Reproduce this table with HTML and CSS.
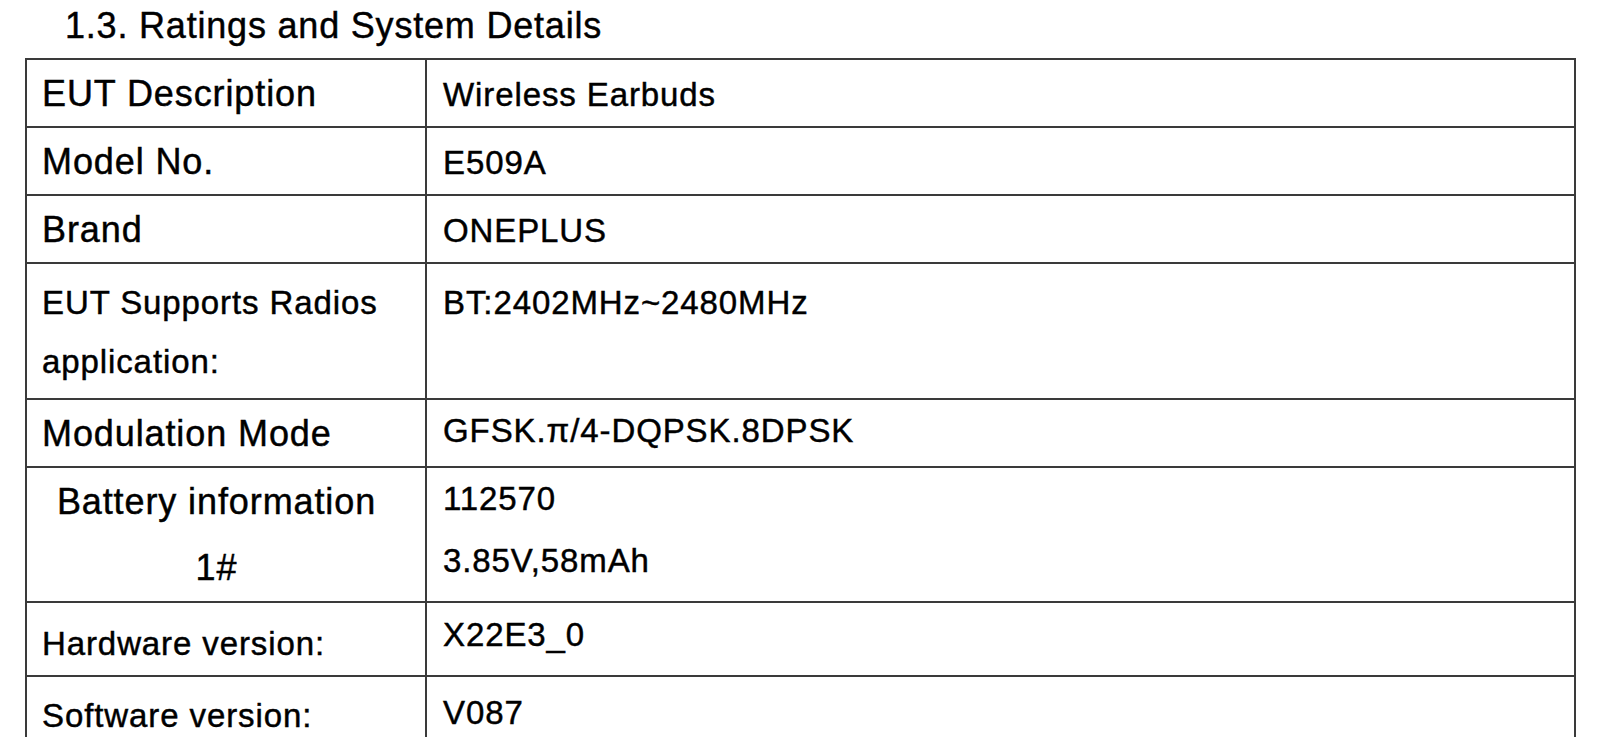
FILE: index.html
```html
<!DOCTYPE html>
<html lang="en">
<head>
<meta charset="utf-8">
<title>1.3. Ratings and System Details</title>
<link rel="stylesheet" href="styles.css">
</head>
<body>
<main class="page">
  <h2 class="heading">1.3. Ratings and System Details</h2>
  <table class="specs">
    <tbody>
      <tr class="r-std">
        <th class="label">EUT Description</th>
        <td class="value">Wireless Earbuds</td>
      </tr>
      <tr class="r-std">
        <th class="label">Model No.</th>
        <td class="value">E509A</td>
      </tr>
      <tr class="r-std">
        <th class="label">Brand</th>
        <td class="value">ONEPLUS</td>
      </tr>
      <tr class="r-radios">
        <th class="label small">EUT Supports Radios<br>application:</th>
        <td class="value">BT:2402MHz~2480MHz</td>
      </tr>
      <tr class="r-mod">
        <th class="label">Modulation Mode</th>
        <td class="value">GFSK.π/4-DQPSK.8DPSK</td>
      </tr>
      <tr class="r-battery">
        <th class="label centered">Battery information<br>1#</th>
        <td class="value">112570<br>3.85V,58mAh</td>
      </tr>
      <tr class="r-hw">
        <th class="label small">Hardware version:</th>
        <td class="value">X22E3_0</td>
      </tr>
      <tr class="r-sw">
        <th class="label small">Software version:</th>
        <td class="value">V087</td>
      </tr>
    </tbody>
  </table>
</main>
</body>
</html>
```

FILE: styles.css
```css
html, body {
  margin: 0;
  padding: 0;
  background: #ffffff;
  overflow: hidden;
}

.page {
  padding: 0 24px 0 25px;
  font-family: "Liberation Sans", Arial, sans-serif;
  color: #000000;
  -webkit-text-stroke: 0.45px #000000;
}

.heading {
  margin: 0 0 10px 40px;
  padding-top: 4px;
  height: 44px;
  font-size: 36px;
  line-height: 44px;
  font-weight: normal;
  letter-spacing: 0.8px;
}

.specs {
  width: 1551px;
  border-collapse: separate;
  border-spacing: 0;
  border-top: 2px solid #3a3a3a;
  border-left: 2px solid #3a3a3a;
  table-layout: fixed;
}

.specs th,
.specs td {
  border-right: 2px solid #3a3a3a;
  border-bottom: 2px solid #3a3a3a;
  vertical-align: top;
  text-align: left;
  font-weight: normal;
  white-space: nowrap;
  box-sizing: border-box;
}

.label {
  width: 400px;
  padding: 3px 0 0 15px;
  font-size: 36px;
  line-height: 62px;
  letter-spacing: 0.9px;
}

.label.small {
  font-size: 33px;
  letter-spacing: 0.9px;
}

.label.centered {
  text-align: center;
  padding: 1px 34px 0 15px;
  line-height: 66px;
}

.value {
  padding: 4px 0 0 16px;
  font-size: 33px;
  line-height: 62px;
  letter-spacing: 0.9px;
}

.r-std { height: 68px; }

.r-radios { height: 136px; }
.r-radios .label { padding-top: 9px; line-height: 59px; }
.r-radios .value { padding-top: 8px; }

.r-mod { height: 68px; }
.r-mod .value { padding-top: 0; }

.r-battery { height: 134px; }
.r-battery .value { padding-top: 0; }

.r-hw { height: 72px; }
.r-hw .label { padding-top: 10px; }
.r-hw .value { padding-top: 1px; }

.r-sw { height: 90px; }
.r-sw .label { padding-top: 8px; }
.r-sw .value { padding-top: 5px; }
```
